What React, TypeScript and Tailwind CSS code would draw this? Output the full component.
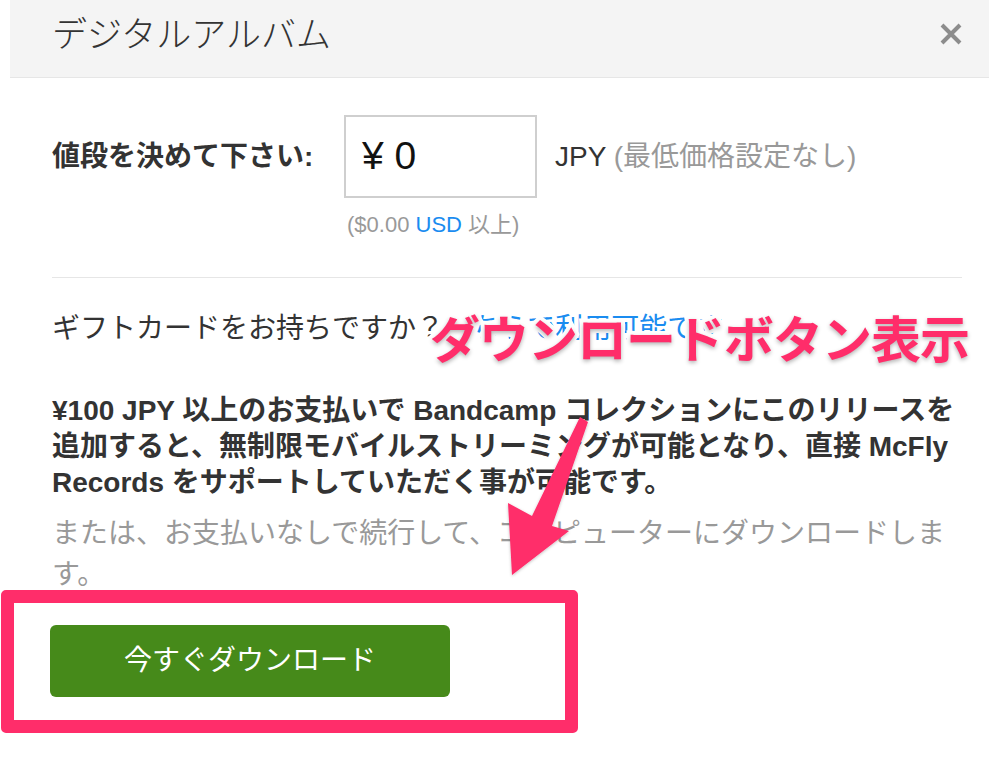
const jp = "font-['Liberation_Sans','Noto_Sans_CJK_JP',sans-serif]";

function CloseIcon() {
  return (
    <svg width="22" height="22" viewBox="0 0 22 22" className="text-[#8c8c8c]">
      <path d="M2 2 L20 20 M20 2 L2 20" stroke="currentColor" strokeWidth="4" strokeLinecap="butt" />
    </svg>
  );
}

function Arrow() {
  return (
    <svg
      className="absolute left-0 top-0 pointer-events-none"
      width="989"
      height="770"
      viewBox="0 0 989 770"
    >
      <defs>
        <filter id="sh" x="-20%" y="-20%" width="140%" height="140%">
          <feDropShadow dx="0" dy="1" stdDeviation="1.5" floodColor="#000" floodOpacity="0.25" />
        </filter>
      </defs>
      <polygon
        points="580,417 588,422 552,526 569,531 512,575 508,503 532,516"
        fill="#ff2d6a"
        filter="url(#sh)"
        strokeLinejoin="round"
      />
    </svg>
  );
}

export default function App() {
  return (
    <div className={`relative w-[989px] h-[770px] overflow-hidden bg-white ${jp}`}>
      <div className="ml-[10px]">
        {/* Header */}
        <div className="h-[78px] bg-[#f4f4f4] border-b border-[#e6e6e6] flex items-start justify-between pl-[42px] pr-[27px]">
          <h1 className="pt-[14px] text-[35px] leading-[42px] font-light text-[#333]">デジタルアルバム</h1>
          <div className="pt-[23px]">
            <CloseIcon />
          </div>
        </div>

        {/* Body */}
        <div className="pl-[42px] pr-[27px]">
          <div className="mt-[37px] flex items-center">
            <label className="w-[292px] text-[28px] leading-[36px] font-bold text-[#333]">値段を決めて下さい:</label>
            <div className="w-[193px] h-[83px] border-2 border-[#cfcfcf] flex items-center pl-[16px] text-[39px] text-[#111]">
              ¥ 0
            </div>
            <div className="ml-[18px] text-[28px] leading-[36px] text-[#333]">
              JPY <span className="text-[#999]">(最低価格設定なし)</span>
            </div>
          </div>
          <div className="mt-[13px] pl-[295px] text-[22px] leading-[28px] text-[#999]">
            ($0.00 <span className="text-[#1a8cf0]">USD</span> 以上)
          </div>

          <div className="mt-[38px] h-px bg-[#e6e6e6]" />

          <p className="mt-[33px] text-[28px] leading-[36px] text-[#333]">
            ギフトカードをお持ちですか？<span className="text-[#1a8cf0]">こちらで利用可能です</span>
          </p>

          <p className="mt-[46px] text-[28px] leading-[36px] font-bold text-[#333]">
            ¥100 JPY 以上のお支払いで Bandcamp コレクションにこのリリースを追加すると、無制限モバイルストリーミングが可能となり、直接 McFly Records をサポートしていただく事が可能です。
          </p>

          <p className="mt-[12px] text-[28px] leading-[41px] text-[#999]">
            または、お支払いなしで続行して、コンピューターにダウンロードします。
          </p>

          {/* highlight frame round the button */}
          <div className="-mt-[5px] -ml-[51px] w-[577px] h-[143px] border-[13px] border-[#ff2d6a] rounded-[5px] pl-[36px] pt-[22px]">
            <button className="w-[400px] h-[72px] rounded-[6px] bg-[#468a1a] text-white text-[28px]">
              今すぐダウンロード
            </button>
          </div>
        </div>
      </div>

      {/* annotation */}
      <div className="absolute left-[430px] top-[306px] text-[50px] leading-[60px] font-bold text-[#ff2d6a] [paint-order:stroke_fill] [-webkit-text-stroke:8px_white] [text-shadow:0_2px_4px_rgba(0,0,0,0.3)] font-['Noto_Sans_CJK_JP',sans-serif] tracking-[-1px]">
        ダウンロードボタン表示
      </div>
      <Arrow />
    </div>
  );
}
